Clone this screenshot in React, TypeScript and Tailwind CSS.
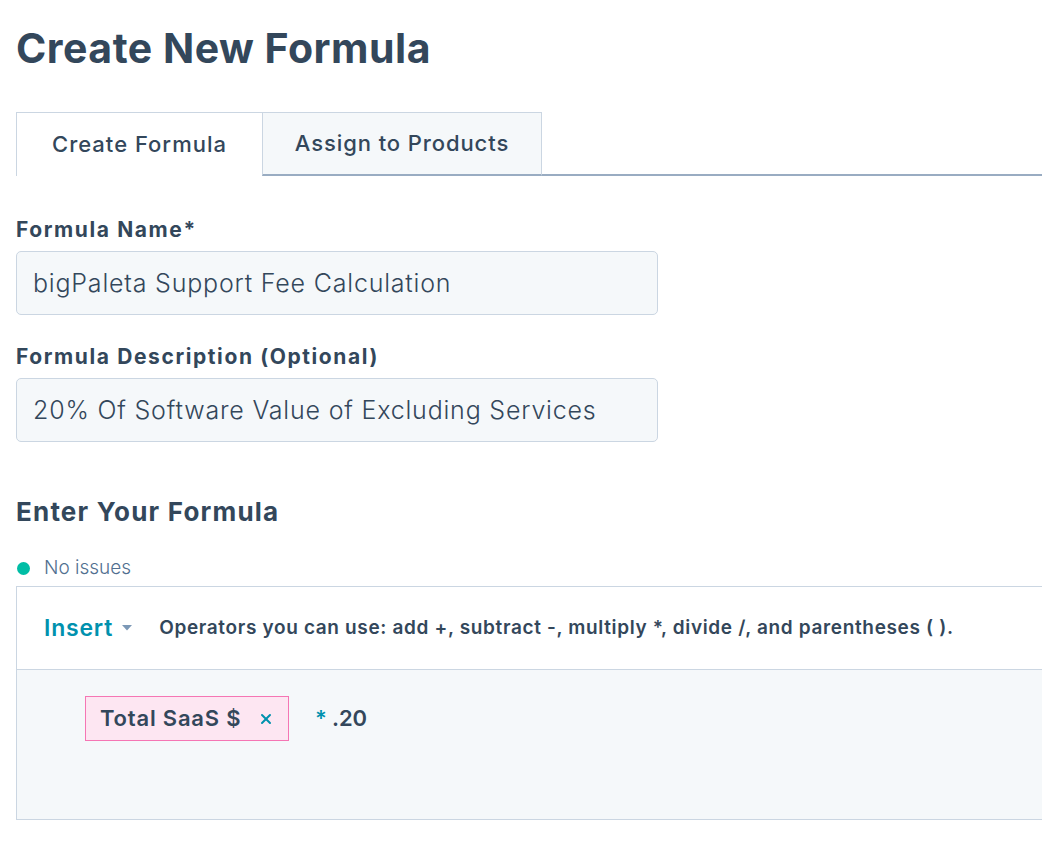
import { X } from 'lucide-react'

const font = { fontFamily: 'Inter, "Noto Sans", sans-serif' }

function Field({ label, value }: { label: string; value: string }) {
    return (
        <div className="flex flex-col">
            <label className="text-[21px] font-bold leading-[24px] tracking-[1.6px] text-[#33475b]">{label}</label>
            <div className="mt-[9px] flex h-[64px] w-[642px] items-center rounded-[5px] border border-[#cbd6e2] bg-[#f5f8fa] px-4 pt-[2px] text-[25px] font-light tracking-[0.8px] text-[#33475b]">{value}</div>
        </div>
    )
}

export default function App() {
    return (
        <div style={font} className="min-h-[850px] w-[1042px] overflow-hidden bg-white pl-4 text-[#33475b]">
            <h1 className="pt-[22px] text-[41px] font-bold leading-[52px] tracking-[0.5px] text-[#33475b]">Create New Formula</h1>

            <div className="mt-[38px] flex h-[64px]">
                <div className="flex w-[246px] items-center justify-center border-l border-t border-[#cbd6e2] bg-white text-[22px] font-medium tracking-[1px]">Create Formula</div>
                <div className="flex w-[280px] items-center justify-center border-b-2 border-l border-r border-t border-b-[#99acc2] border-l-[#cbd6e2] border-r-[#cbd6e2] border-t-[#cbd6e2] bg-[#f5f8fa] text-[22px] font-medium tracking-[0.9px]">Assign to Products</div>
                <div className="flex-1 border-b-2 border-[#99acc2]" />
            </div>

            <div className="mt-[42px] flex flex-col gap-[30px]">
                <Field label="Formula Name*" value="bigPaleta Support Fee Calculation" />
                <Field label="Formula Description (Optional)" value="20% Of Software Value of Excluding Services" />
            </div>

            <h2 className="mt-[55px] text-[26px] font-bold leading-[30px] tracking-[1.2px]">Enter Your Formula</h2>

            <div className="mt-[29px] flex items-center gap-[14px] pl-[1px]">
                <span className="h-[13px] w-[13px] rounded-full bg-[#00bda5]" />
                <span className="text-[19px] font-light leading-[24px] text-[#516f90]">No issues</span>
            </div>

            <div className="mt-[6px] border-y border-l border-[#cbd6e2]">
                <div className="flex h-[83px] items-center border-b border-[#cbd6e2] bg-white pl-[27px]">
                    <span className="text-[23px] font-semibold tracking-[0.8px] text-[#0091ae]">Insert</span>
                    <svg className="ml-[8px]" width="12" height="8" viewBox="0 0 12 8">
                        <path d="M1 1 L6 6.5 L11 1 Z" fill="#7c98b6" />
                    </svg>
                    <span className="ml-[26px] text-[19px] font-semibold tracking-[0.65px]">Operators you can use: add +, subtract -, multiply *, divide /, and parentheses ( ).</span>
                </div>
                <div className="h-[149px] bg-[#f5f8fa] pl-[68px] pt-[26px]">
                    <div className="flex items-center">
                        <div className="flex h-[45px] w-[204px] items-center border border-[#f576b4] bg-[#fde6f2] pl-[14px]">
                            <span className="text-[22px] font-semibold tracking-[0.8px]">Total SaaS $</span>
                            <X className="ml-auto mr-[14px] text-[#0091ae]" size={16} strokeWidth={3} />
                        </div>
                        <span className="ml-[26px] text-[22px] font-semibold text-[#0091ae]">*</span>
                        <span className="ml-[5px] text-[22px] font-semibold">.20</span>
                    </div>
                </div>
            </div>
        </div>
    )
}
